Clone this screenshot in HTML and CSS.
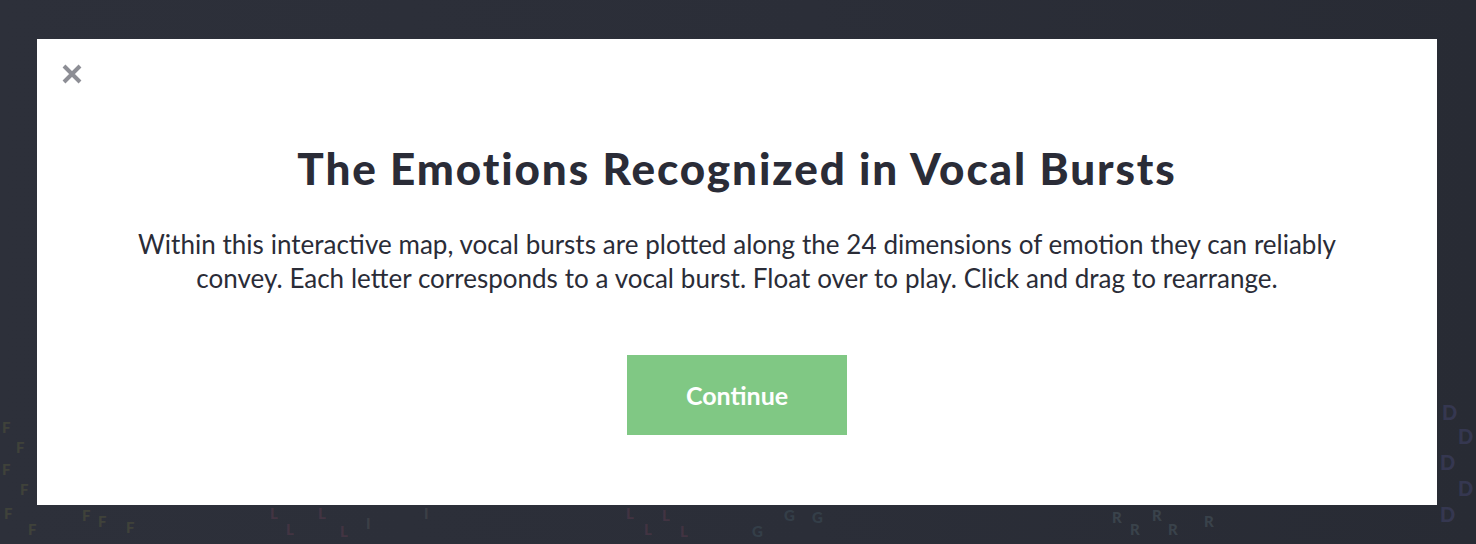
FILE: index.html
```html
<!DOCTYPE html>
<html lang="en">
<head>
<meta charset="utf-8">
<title>The Emotions Recognized in Vocal Bursts</title>
<link rel="stylesheet" href="styles.css">
</head>
<body>
<div class="stage">
  <div class="bg-letters" aria-hidden="true">
    <span class="ltr f" style="left:2px;top:420px">F</span>
    <span class="ltr f" style="left:16px;top:440px">F</span>
    <span class="ltr f" style="left:2px;top:462px">F</span>
    <span class="ltr f" style="left:20px;top:482px">F</span>
    <span class="ltr f" style="left:4px;top:506px">F</span>
    <span class="ltr f" style="left:82px;top:508px">F</span>
    <span class="ltr f" style="left:98px;top:514px">F</span>
    <span class="ltr f" style="left:28px;top:522px">F</span>
    <span class="ltr f" style="left:126px;top:520px">F</span>
    <span class="ltr l" style="left:270px;top:506px">L</span>
    <span class="ltr l" style="left:318px;top:506px">L</span>
    <span class="ltr l" style="left:286px;top:522px">L</span>
    <span class="ltr l" style="left:340px;top:524px">L</span>
    <span class="ltr i" style="left:366px;top:516px">I</span>
    <span class="ltr i" style="left:424px;top:506px">I</span>
    <span class="ltr l" style="left:626px;top:506px">L</span>
    <span class="ltr l" style="left:644px;top:522px">L</span>
    <span class="ltr l" style="left:662px;top:508px">L</span>
    <span class="ltr l" style="left:680px;top:524px">L</span>
    <span class="ltr g" style="left:784px;top:508px">G</span>
    <span class="ltr g" style="left:812px;top:510px">G</span>
    <span class="ltr g" style="left:752px;top:524px">G</span>
    <span class="ltr r" style="left:1112px;top:510px">R</span>
    <span class="ltr r" style="left:1130px;top:522px">R</span>
    <span class="ltr r" style="left:1152px;top:508px">R</span>
    <span class="ltr r" style="left:1168px;top:522px">R</span>
    <span class="ltr r" style="left:1204px;top:514px">R</span>
    <span class="ltr d" style="left:1442px;top:402px">D</span>
    <span class="ltr d" style="left:1458px;top:426px">D</span>
    <span class="ltr d" style="left:1440px;top:452px">D</span>
    <span class="ltr d" style="left:1458px;top:478px">D</span>
    <span class="ltr d" style="left:1440px;top:504px">D</span>
  </div>

  <div class="modal">
    <button class="close" type="button" aria-label="Close">
      <svg width="22" height="22" viewBox="0 0 22 22">
        <path d="M3 3 L19 19 M19 3 L3 19" stroke="#8d8e95" stroke-width="4" stroke-linecap="butt"/>
      </svg>
    </button>
    <h1 class="title">The Emotions Recognized in Vocal Bursts</h1>
    <p class="lead">Within this interactive map, vocal bursts are plotted along the 24 dimensions of emotion they can reliably convey. Each letter corresponds to a vocal burst. Float over to play. Click and drag to rearrange.</p>
    <button class="continue" type="button">Continue</button>
  </div>
</div>
</body>
</html>
```

FILE: styles.css
```css
html, body {
  margin: 0;
  padding: 0;
  height: 100%;
}

body {
  background: #2c2e39;
  font-family: "Lato", "Open Sans", sans-serif;
  overflow: hidden;
}

.stage {
  position: relative;
  width: 1476px;
  height: 544px;
  padding: 39px 0 0 37px;
  box-sizing: border-box;
  background: linear-gradient(90deg, #2d303a 0%, #2b2e38 55%, #282b34 100%);
}

.bg-letters {
  position: absolute;
  inset: 0;
  pointer-events: none;
}

.ltr {
  position: absolute;
  font-family: "Lato", sans-serif;
  font-weight: 900;
  font-size: 15px;
  line-height: 1;
  opacity: 0.2;
}

.ltr.f { color: #8a8a3c; }
.ltr.l { color: #9a4a6a; }
.ltr.i { color: #7a7e7a; }
.ltr.g { color: #5a808a; }
.ltr.r { color: #7a9a9e; }
.ltr.d { color: #6a6ac0; font-size: 20px; }

.modal {
  position: relative;
  width: 1400px;
  height: 466px;
  box-sizing: border-box;
  background: #ffffff;
  display: flex;
  flex-direction: column;
  align-items: center;
  padding-top: 99px;
}

.close {
  position: absolute;
  left: 24px;
  top: 24px;
  width: 22px;
  height: 22px;
  padding: 0;
  border: 0;
  background: none;
  cursor: pointer;
}

.close svg {
  display: block;
}

.title {
  margin: 0;
  font-family: "Lato", sans-serif;
  font-weight: 900;
  font-size: 44px;
  line-height: 60px;
  letter-spacing: 1.9px;
  color: #2a2c37;
  text-align: center;
}

.lead {
  margin: 29px 0 0;
  width: 1220px;
  font-family: "Lato", sans-serif;
  font-weight: 400;
  font-size: 26px;
  line-height: 34px;
  word-spacing: 0.2px;
  color: #2a2c37;
  text-align: center;
}

.continue {
  margin-top: 60px;
  width: 220px;
  height: 80px;
  border: 0;
  background: #80c884;
  color: #ffffff;
  font-family: "Lato", sans-serif;
  font-weight: 700;
  font-size: 25px;
  cursor: pointer;
}
```
